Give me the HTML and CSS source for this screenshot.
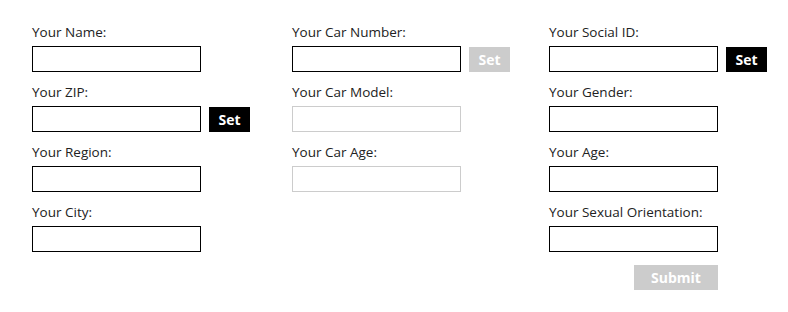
FILE: index.html
```html
<!DOCTYPE html>
<html lang="en">
<head>
    <meta charset="UTF-8">
    <title>Profile</title>
    <link rel="stylesheet" href="styles.css">
</head>
<body>
    <form class="profile">
        <div class="column">
            <div class="field">
                <label for="name">Your Name:</label>
                <input type="text" id="name">
            </div>
            <div class="field">
                <label for="zip">Your ZIP:</label>
                <div class="row">
                    <input type="text" id="zip">
                    <button type="button" class="set">Set</button>
                </div>
            </div>
            <div class="field">
                <label for="region">Your Region:</label>
                <input type="text" id="region">
            </div>
            <div class="field">
                <label for="city">Your City:</label>
                <input type="text" id="city">
            </div>
        </div>

        <div class="column">
            <div class="field">
                <label for="carNumber">Your Car Number:</label>
                <div class="row">
                    <input type="text" id="carNumber">
                    <button type="button" class="set" disabled>Set</button>
                </div>
            </div>
            <div class="field">
                <label for="carModel">Your Car Model:</label>
                <input type="text" id="carModel" disabled>
            </div>
            <div class="field">
                <label for="carAge">Your Car Age:</label>
                <input type="text" id="carAge" disabled>
            </div>
        </div>

        <div class="column">
            <div class="field">
                <label for="socialId">Your Social ID:</label>
                <div class="row">
                    <input type="text" id="socialId">
                    <button type="button" class="set">Set</button>
                </div>
            </div>
            <div class="field">
                <label for="gender">Your Gender:</label>
                <input type="text" id="gender">
            </div>
            <div class="field">
                <label for="age">Your Age:</label>
                <input type="text" id="age">
            </div>
            <div class="field">
                <label for="orientation">Your Sexual Orientation:</label>
                <input type="text" id="orientation">
            </div>
            <div class="actions">
                <button type="submit" class="submit" disabled>Submit</button>
            </div>
        </div>
    </form>
</body>
</html>
```

FILE: styles.css
```css
body {
    font-family: "Open Sans", Arial, sans-serif;
    margin: 0;
    padding: 0;
    background-color: #fff;
    color: #222;
}
.profile {
    display: grid;
    grid-template-columns: 260px 257px 1fr;
    padding: 22px 0 0 32px;
}
.column {
    display: flex;
    flex-direction: column;
}
.field {
    margin-bottom: 10px;
}
label {
    display: block;
    font-size: 13.5px;
    line-height: 20px;
    margin-bottom: 4px;
}
.row {
    display: flex;
    align-items: center;
    gap: 8px;
}
input {
    display: block;
    box-sizing: border-box;
    width: 169px;
    height: 26px;
    margin: 0;
    padding: 2px 6px;
    font-size: 14px;
    border: 1px solid #000;
    border-radius: 0;
    background-color: #fff;
}
input:disabled {
    border-color: #ccc;
}
button {
    font-family: "Open Sans", Arial, sans-serif;
    font-weight: bold;
    font-size: 14px;
    color: #fff;
    background-color: #000;
    border: none;
    border-radius: 0;
    padding: 0;
    cursor: pointer;
}
button:disabled {
    background-color: #ccc;
    cursor: default;
}
.set {
    width: 41px;
    height: 25px;
}
.actions {
    width: 169px;
    display: flex;
    justify-content: flex-end;
    margin-top: 3px;
}
.submit {
    width: 84px;
    height: 25px;
}
```
